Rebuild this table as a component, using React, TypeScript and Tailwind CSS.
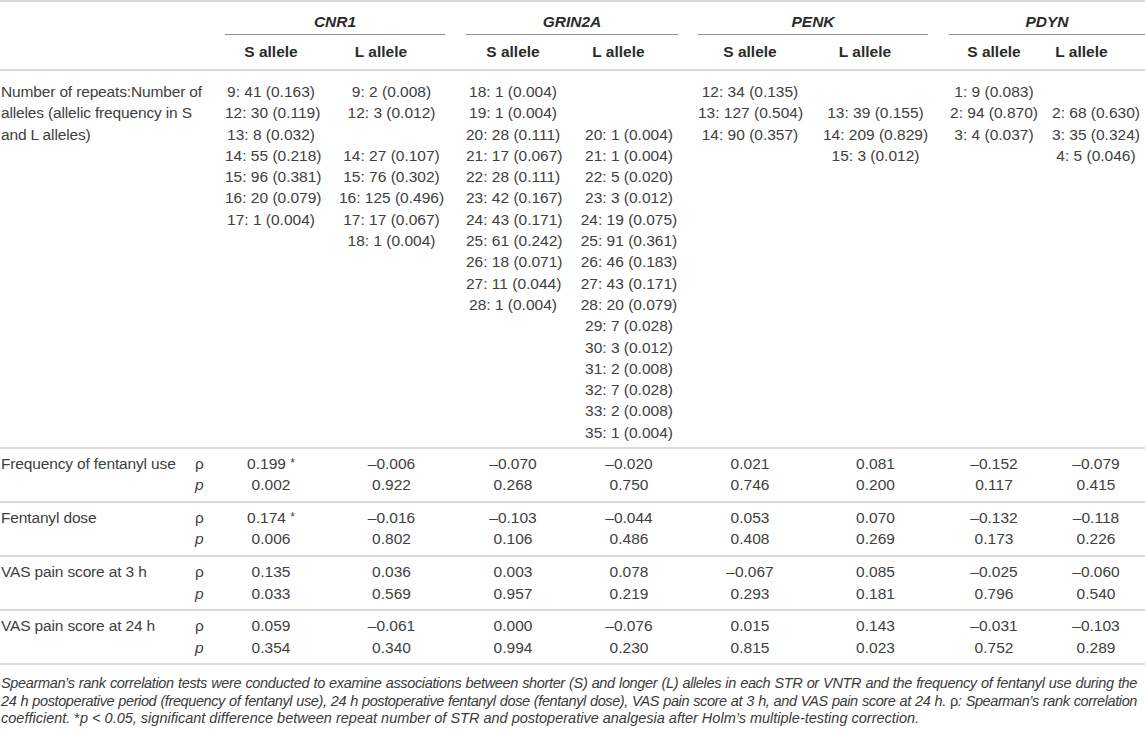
import React from 'react';

const grid =
  'grid grid-cols-[188px_37px_92px_149px_94px_138px_104px_147px_90px_106px]';

const genes = [
  { name: 'CNR1', span: 'pr-[21px]' },
  { name: 'GRIN2A', span: 'pr-[20px]' },
  { name: 'PENK', span: 'pr-[21px]' },
  { name: 'PDYN', span: 'pr-0' },
];

// allele lists, '' keeps an empty line so rows stay aligned
const alleles: string[][] = [
  [
    '9: 41 (0.163)',
    '12: 30 (0.119)',
    '13: 8 (0.032)',
    '14: 55 (0.218)',
    '15: 96 (0.381)',
    '16: 20 (0.079)',
    '17: 1 (0.004)',
  ],
  [
    '9: 2 (0.008)',
    '12: 3 (0.012)',
    '',
    '14: 27 (0.107)',
    '15: 76 (0.302)',
    '16: 125 (0.496)',
    '17: 17 (0.067)',
    '18: 1 (0.004)',
  ],
  [
    '18: 1 (0.004)',
    '19: 1 (0.004)',
    '20: 28 (0.111)',
    '21: 17 (0.067)',
    '22: 28 (0.111)',
    '23: 42 (0.167)',
    '24: 43 (0.171)',
    '25: 61 (0.242)',
    '26: 18 (0.071)',
    '27: 11 (0.044)',
    '28: 1 (0.004)',
  ],
  [
    '',
    '',
    '20: 1 (0.004)',
    '21: 1 (0.004)',
    '22: 5 (0.020)',
    '23: 3 (0.012)',
    '24: 19 (0.075)',
    '25: 91 (0.361)',
    '26: 46 (0.183)',
    '27: 43 (0.171)',
    '28: 20 (0.079)',
    '29: 7 (0.028)',
    '30: 3 (0.012)',
    '31: 2 (0.008)',
    '32: 7 (0.028)',
    '33: 2 (0.008)',
    '35: 1 (0.004)',
  ],
  ['12: 34 (0.135)', '13: 127 (0.504)', '14: 90 (0.357)'],
  ['', '13: 39 (0.155)', '14: 209 (0.829)', '15: 3 (0.012)'],
  ['1: 9 (0.083)', '2: 94 (0.870)', '3: 4 (0.037)'],
  ['', '2: 68 (0.630)', '3: 35 (0.324)', '4: 5 (0.046)'],
];

const stats = [
  {
    label: 'Frequency of fentanyl use',
    rho: ['0.199 *', '–0.006', '–0.070', '–0.020', '0.021', '0.081', '–0.152', '–0.079'],
    p: ['0.002', '0.922', '0.268', '0.750', '0.746', '0.200', '0.117', '0.415'],
  },
  {
    label: 'Fentanyl dose',
    rho: ['0.174 *', '–0.016', '–0.103', '–0.044', '0.053', '0.070', '–0.132', '–0.118'],
    p: ['0.006', '0.802', '0.106', '0.486', '0.408', '0.269', '0.173', '0.226'],
  },
  {
    label: 'VAS pain score at 3 h',
    rho: ['0.135', '0.036', '0.003', '0.078', '–0.067', '0.085', '–0.025', '–0.060'],
    p: ['0.033', '0.569', '0.957', '0.219', '0.293', '0.181', '0.796', '0.540'],
  },
  {
    label: 'VAS pain score at 24 h',
    rho: ['0.059', '–0.061', '0.000', '–0.076', '0.015', '0.143', '–0.031', '–0.103'],
    p: ['0.354', '0.340', '0.994', '0.230', '0.815', '0.023', '0.752', '0.289'],
  },
];

function Line({ children }: { children?: React.ReactNode }) {
  return <div className="h-[21.3px] whitespace-nowrap leading-[21.3px]">{children}</div>;
}

export default function App() {
  return (
    <div className="h-[732px] w-[1145px] overflow-hidden bg-white font-['Liberation_Sans',Arial,sans-serif] text-[15.5px] text-[#404040]">
      <div className="border-t-2 border-[#d9d9d9]">
        {/* gene names */}
        <div className={grid}>
          <div className="col-span-2" />
          {genes.map((gene) => (
            <div key={gene.name} className={`col-span-2 h-[33px] ${gene.span} flex flex-col justify-end`}>
              <div className="border-b border-[#8f8f8f] pb-[2px] text-center font-bold italic leading-[21px] text-[#2b2b2b]">
                {gene.name}
              </div>
            </div>
          ))}
        </div>

        {/* allele headers */}
        <div className={`${grid} border-b-2 border-[#d9d9d9]`}>
          <div className="col-span-2" />
          {alleles.map((_, i) => (
            <div
              key={i}
              className={`pb-[7px] pt-[6px] text-center font-bold leading-[21px] text-[#2b2b2b] ${
                i % 2 === 1 ? 'pr-[21px]' : ''
              }`}
            >
              {i % 2 === 0 ? 'S allele' : 'L allele'}
            </div>
          ))}
        </div>

        {/* repeat counts */}
        <div className={`${grid} border-b-2 border-[#d9d9d9] pb-[4px] pt-[10px]`}>
          <div className="col-span-2 pl-[1px] tracking-[-0.15px]">
            <Line>Number of repeats:Number of</Line>
            <Line>alleles (allelic frequency in S</Line>
            <Line>and L alleles)</Line>
          </div>
          {alleles.map((list, i) => (
            <div key={i} className={`text-center ${i === 7 ? 'pl-[8px]' : ''}`}>
              {list.map((item, j) => (
                <Line key={j}>{item}</Line>
              ))}
            </div>
          ))}
        </div>

        {/* correlations */}
        {stats.map((row) => (
          <div key={row.label} className={`${grid} border-b-2 border-[#d9d9d9] pb-[5.5px] pt-[4px]`}>
            <div className="pl-[1px] tracking-[-0.15px]">
              <Line>{row.label}</Line>
            </div>
            <div className="pl-[7px]">
              <Line>ρ</Line>
              <Line>
                <span className="italic">p</span>
              </Line>
            </div>
            {row.rho.map((value, i) => (
              <div key={i} className={`text-center ${i === 7 ? 'pl-[8px]' : ''}`}>
                <Line>
                  {value.endsWith('*') ? (
                    <>
                      {value.slice(0, -1)}
                      <span className="align-top text-[12px]">*</span>
                    </>
                  ) : (
                    value
                  )}
                </Line>
                <Line>{row.p[i]}</Line>
              </div>
            ))}
          </div>
        ))}

        {/* footnote */}
        <div className="pl-[1px] pr-[8px] pt-[10px] text-[14.5px] italic leading-[17.5px] text-[#3a3a3a]">
          <div className="whitespace-nowrap tracking-[-0.35px] [text-align-last:justify]">
            Spearman’s rank correlation tests were conducted to examine associations between shorter (S) and longer (L)
            alleles in each STR or VNTR and the frequency of fentanyl use during the
          </div>
          <div className="whitespace-nowrap tracking-[-0.4px] [text-align-last:justify]">
            24 h postoperative period (frequency of fentanyl use), 24 h postoperative fentanyl dose (fentanyl dose), VAS pain
            score at 3 h, and VAS pain score at 24 h. <span className="not-italic">ρ</span>: Spearman’s rank correlation
          </div>
          <div className="whitespace-nowrap">
            coefficient. <span className="not-italic">*</span>p &lt; 0.05, significant difference between repeat number of
            STR and postoperative analgesia after Holm’s multiple-testing correction.
          </div>
        </div>
      </div>
    </div>
  );
}
